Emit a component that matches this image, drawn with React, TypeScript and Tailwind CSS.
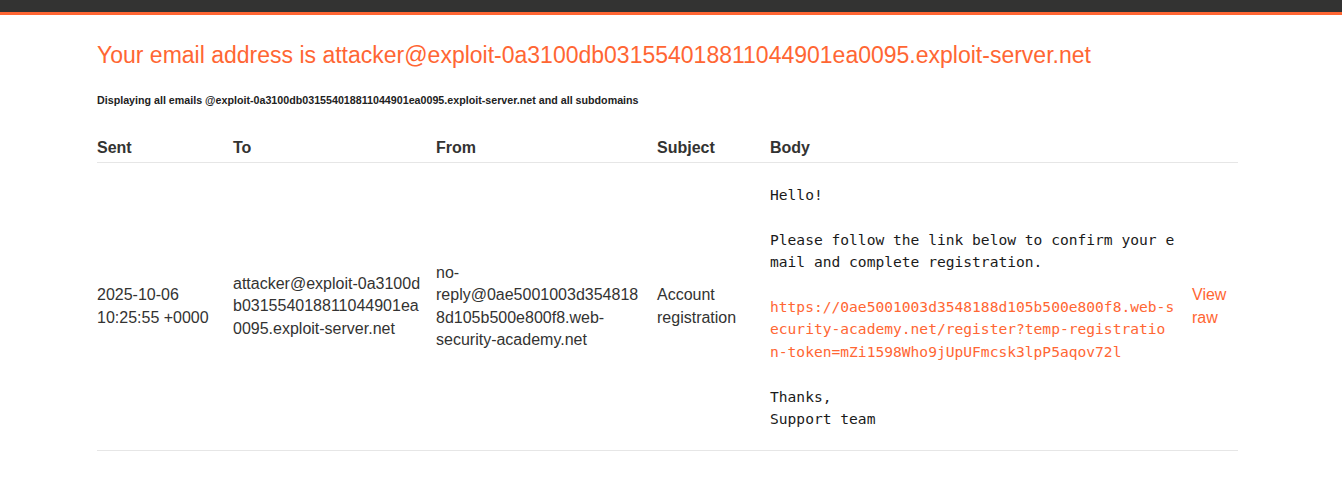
import React from "react";

const orange = "text-[#ff6633]";

export default function App() {
  return (
    <div className="min-h-[500px] bg-white text-[#333332]" style={{ fontFamily: '"Liberation Sans", Arial, sans-serif' }}>
      <div className="h-[12px] bg-[#333332]" />
      <div className="h-[3px] bg-[#ff6633]" />
      <div className="pl-[97px] pr-[104px]">
        <h1 className={`mt-[26px] text-[23px] leading-[28px] ${orange}`}>
          Your email address is attacker@exploit-0a3100db031554018811044901ea0095.exploit-server.net
        </h1>
        <p className="mt-[24px] text-[10.7px] font-bold leading-[14px] text-[#222]">
          Displaying all emails @exploit-0a3100db031554018811044901ea0095.exploit-server.net and all subdomains
        </p>
        <div className="mt-[26px] w-[1141px]">
          <div className="flex h-[30px] items-center border-b border-[#e6e6e6] text-[16px] font-bold">
            <div className="w-[136px]">Sent</div>
            <div className="w-[203px]">To</div>
            <div className="w-[221px]">From</div>
            <div className="w-[113px]">Subject</div>
            <div>Body</div>
          </div>
          <div className="flex items-center border-b border-[#e6e6e6] text-[16px] leading-[22.6px]">
            <div className="w-[136px]">
              2025-10-06
              <br />
              10:25:55 +0000
            </div>
            <div className="w-[203px]">
              attacker@exploit-0a3100d
              <br />
              b031554018811044901ea
              <br />
              0095.exploit-server.net
            </div>
            <div className="w-[221px]">
              no-
              <br />
              reply@0ae5001003d354818
              <br />
              8d105b500e800f8.web-
              <br />
              security-academy.net
            </div>
            <div className="w-[113px]">
              Account
              <br />
              registration
            </div>
            <div className="w-[422px] pt-[21px] pb-[20px]">
              <pre
                className="m-0 whitespace-pre text-[14.6px] leading-[22.4px] text-[#1a1a1a]"
                style={{ fontFamily: '"DejaVu Sans Mono", "Liberation Mono", monospace' }}
              >
                {"Hello!\n\nPlease follow the link below to confirm your e\nmail and complete registration.\n\n"}
                <span className={orange}>
                  {"https://0ae5001003d3548188d105b500e800f8.web-s\necurity-academy.net/register?temp-registratio\nn-token=mZi1598Who9jUpUFmcsk3lpP5aqov72l"}
                </span>
                {"\n\nThanks,\nSupport team"}
              </pre>
            </div>
            <div className={`text-[16px] leading-[22.6px] ${orange}`}>
              View
              <br />
              raw
            </div>
          </div>
        </div>
      </div>
    </div>
  );
}
